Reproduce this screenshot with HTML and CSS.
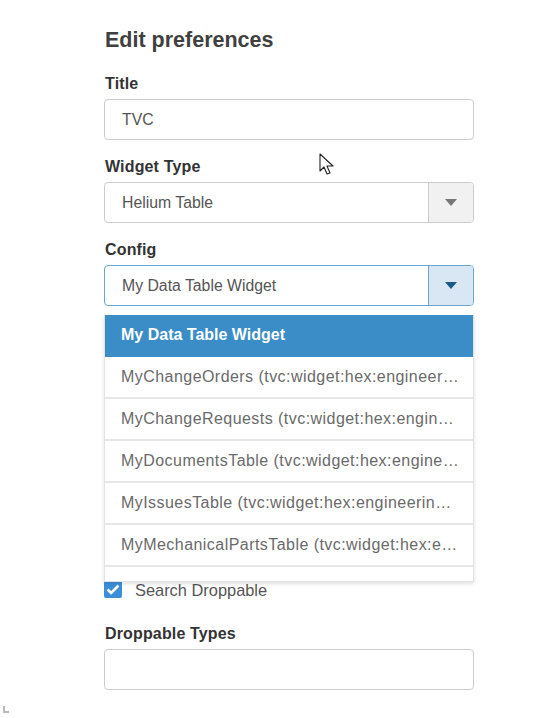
FILE: index.html
```html
<!DOCTYPE html>
<html>
<head>
<meta charset="utf-8">
<link rel="stylesheet" href="styles.css">
</head>
<body>
<div class="panel">
  <h1 class="heading">Edit preferences</h1>

  <div class="field">
    <label class="label">Title</label>
    <div class="input">TVC</div>
  </div>

  <div class="field">
    <label class="label">Widget Type</label>
    <div class="select">
      <div class="select-value">Helium Table</div>
      <div class="select-btn"><span class="caret"></span></div>
    </div>
  </div>

  <div class="field field-config">
    <label class="label">Config</label>
    <div class="select select-open">
      <div class="select-value">My Data Table Widget</div>
      <div class="select-btn"><span class="caret"></span></div>
    </div>
    <ul class="menu">
      <li class="menu-item active">My Data Table Widget</li>
      <li class="menu-item">MyChangeOrders (tvc:widget:hex:engineer…</li>
      <li class="menu-item">MyChangeRequests (tvc:widget:hex:engin…</li>
      <li class="menu-item">MyDocumentsTable (tvc:widget:hex:engine…</li>
      <li class="menu-item">MyIssuesTable (tvc:widget:hex:engineerin…</li>
      <li class="menu-item">MyMechanicalPartsTable (tvc:widget:hex:e…</li>
      <li class="menu-item"></li>
    </ul>
  </div>

  <div class="check-row">
    <span class="checkbox">
      <svg width="14" height="11" viewBox="0 0 14 11"><path d="M1.5 5.5 L5.2 9 L12.5 1.5" fill="none" stroke="#fff" stroke-width="2.6"/></svg>
    </span>
    <span class="check-label">Search Droppable</span>
  </div>

  <div class="field">
    <label class="label">Droppable Types</label>
    <div class="input"></div>
  </div>
</div>

<svg class="cursor" width="17" height="24" viewBox="0 0 17 24">
  <path d="M1 1 L1 18 L5 14 L8 21 L11 20 L8 13 L14 13 Z" fill="#fff" stroke="#222" stroke-width="1.1" stroke-linejoin="round"/>
</svg>
<span class="corner"></span>
</body>
</html>
```

FILE: styles.css
```css
* { box-sizing: border-box; }
html, body { margin: 0; padding: 0; background: #fff; }
body {
  font-family: "Liberation Sans", Arial, sans-serif;
  width: 557px;
  height: 718px;
  position: relative;
  overflow: hidden;
}
.panel {
  padding-left: 104px;
  width: 474px;
}
.heading {
  margin: 28px 0 22px 1px;
  font-size: 21.5px;
  line-height: 24px;
  font-weight: bold;
  color: #404040;
}
.field { margin-bottom: 17px; }
.label {
  display: block;
  margin: 0 0 5px 1px;
  font-size: 16px;
  line-height: 20px;
  font-weight: bold;
  color: #333;
  letter-spacing: 0.15px;
}
.input {
  height: 41px;
  border: 1px solid #ccc;
  border-radius: 4px;
  padding-left: 17px;
  display: flex;
  align-items: center;
  font-size: 15.8px;
  color: #555;
}
.select {
  height: 41px;
  border: 1px solid #ccc;
  border-radius: 4px;
  display: flex;
  overflow: hidden;
}
.select-value {
  flex: 1;
  padding-left: 17px;
  display: flex;
  align-items: center;
  font-size: 15.8px;
  color: #555;
}
.select-btn {
  width: 45px;
  border-left: 1px solid #ccc;
  background: #f1f1f1;
  display: flex;
  align-items: center;
  justify-content: center;
}
.caret {
  width: 0;
  height: 0;
  border-left: 6px solid transparent;
  border-right: 6px solid transparent;
  border-top: 7px solid #777;
}
.select-open { border-color: #6aa6d3; }
.select-open .select-btn {
  border-left-color: #6aa6d3;
  background: #d8e7f3;
}
.select-open .caret { border-top-color: #1a5a88; }
.field-config { position: relative; margin-bottom: 0; }
.menu {
  position: absolute;
  left: 0;
  right: 0;
  top: calc(100% + 9px);
  height: 267px;
  margin: 0;
  padding: 0;
  list-style: none;
  overflow: hidden;
  background: #fff;
  border: 1px solid #e3e3e3;
  border-top: 0;
  box-shadow: 0 2px 4px rgba(0,0,0,0.12);
  z-index: 2;
}
.menu-item {
  height: 42px;
  line-height: 40px;
  padding: 0 10px 0 16px;
  font-size: 16px;
  letter-spacing: 0.45px;
  color: #6a6a6a;
  border-bottom: 2px solid #e6e6e6;
  white-space: nowrap;
}
.menu-item.active {
  background: #3a8dc6;
  color: #fff;
  font-weight: bold;
  letter-spacing: 0;
  border-bottom-color: #3a8dc6;
}
.check-row {
  margin-top: 274px;
  height: 20px;
  display: flex;
  align-items: center;
}
.checkbox {
  width: 18px;
  height: 18px;
  border-radius: 2px;
  background: #3b8fd9;
  display: flex;
  align-items: center;
  justify-content: center;
  margin-top: -2px;
}
.check-label {
  margin-left: 13px;
  font-size: 16.4px;
  color: #555;
}
.check-row + .field { margin-top: 24px; }
.cursor {
  position: absolute;
  left: 319px;
  top: 153px;
}
.corner {
  position: absolute;
  left: 3px;
  top: 706px;
  width: 6px;
  height: 7px;
  border-left: 2px solid #bbb;
  border-bottom: 2px solid #bbb;
}
```
